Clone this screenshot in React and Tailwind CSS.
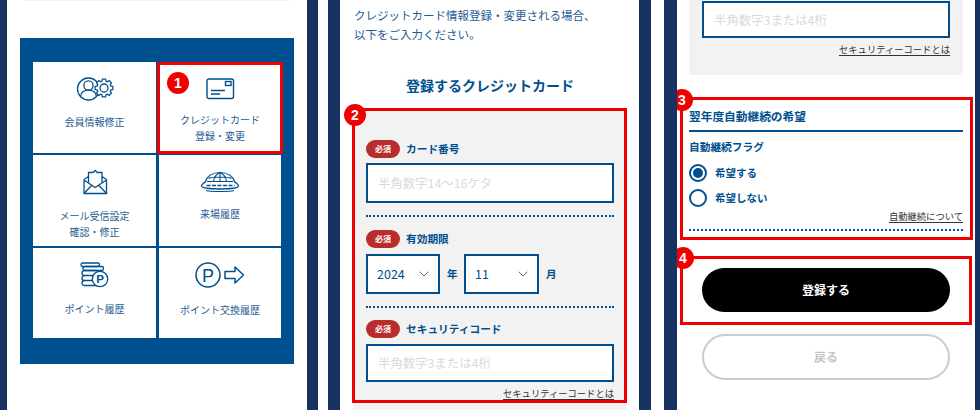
import React from 'react';
import { ChevronDown } from 'lucide-react';

const BLUE = '#00508f';

const gearPath = (cx, cy, ro, ri, teeth) => {
    const pts = [];
    const step = (Math.PI * 2) / teeth;
    for (let i = 0; i < teeth; i++) {
        const a = i * step;
        [[-0.32, ri], [-0.18, ro], [0.18, ro], [0.32, ri]].forEach(([f, r]) => {
            const t = a + f * step * 1.25;
            pts.push(`${(cx + Math.cos(t) * r).toFixed(2)} ${(cy + Math.sin(t) * r).toFixed(2)}`);
        });
    }
    return `M${pts.join('L')}Z`;
};

const MemberIcon = () => (
    <svg width="38" height="26" viewBox="0 0 38 26" fill="none" stroke={BLUE} strokeWidth="1.3">
        <circle cx="12.5" cy="13" r="11" />
        <circle cx="12.5" cy="9.5" r="4.6" />
        <path d="M4.5 20.5c.6-4.2 3.6-6.3 8-6.3s7.4 2.1 8 6.3" />
        <path d={gearPath(28, 12, 9, 7, 8)} fill="#fff" />
        <circle cx="28" cy="12" r="4" />
    </svg>
);

const CardIcon = () => (
    <svg width="29" height="22" viewBox="0 0 29 22" fill="none" stroke={BLUE} strokeWidth="1.4">
        <rect x="1" y="1" width="26.5" height="19.5" rx="2" />
        <rect x="19.5" y="3.5" width="5.5" height="4" />
        <path d="M5 12.5h14M5 16h9" strokeWidth="1.3" />
    </svg>
);

const MailIcon = () => (
    <svg width="26" height="26" viewBox="0 0 26 26" fill="none" stroke={BLUE} strokeWidth="1.3">
        <path d="M2 10.5v14h22.5v-14" />
        <path d="M2 10.5l4.5-3M24.5 10.5l-4.5-3" />
        <path d="M6.5 13.5V3.5H11l2.2-2 2.2 2H20v10" />
        <path d="M2 11l11.2 7.5L24.500 11M2 24.500l8-8.500M24.500 24.500l-8-8.500" />
    </svg>
);

const StadiumIcon = () => (
    <svg width="40" height="22" viewBox="0 0 40 22" fill="none" stroke={BLUE} strokeWidth="1.1">
        <path d="M5 11.5C7 5 13 1.5 20 1.5s13 3.5 15 10" />
        <path d="M13.5 10.500C14 6.500 16.500 3 20 1.500c3.500 1.500 6 5 6.500 9M20 1.500v9M8.500 7.500C13 5.500 27 5.500 31.500 7.500M7 10.500h26" />
        <path d="M5 11c-2 1.500-3.500 3-3.500 4 0 1.800 8 3 18.500 3s18.500-1.200 18.500-3c0-1-1.500-2.500-3.500-4" strokeWidth="1.3" />
        <path d="M6.500 14.500h28" strokeWidth="1.5" strokeDasharray="4 1.5" />
        <path d="M6 19.500c4 1.300 24 1.300 28 0" />
    </svg>
);

const CoinIcon = () => (
    <svg width="29" height="26" viewBox="0 0 29 26" fill="none" stroke={BLUE} strokeWidth="1.3">
        <rect x="1" y="1" width="18.5" height="3.5" rx="1.7" />
        <rect x="3" y="4.5" width="20.5" height="4" rx="1.7" />
        <path d="M17 8.500H4.500a1.500 1.500 0 0 0 0 5H13M13 13.500H4.500a1.500 1.500 0 0 0 0 5H13M13.500 18.500h-9a1.500 1.500 0 0 0 0 5h12" />
        <circle cx="20" cy="17" r="7.7" fill="#fff" />
        <text x="20" y="21.2" textAnchor="middle" fontSize="11.5" fontWeight="700" fill={BLUE} stroke="none" fontFamily="Liberation Sans, sans-serif">P</text>
    </svg>
);

const ExchangeIcon = () => (
    <svg width="50" height="26" viewBox="0 0 50 26" fill="none" stroke={BLUE} strokeWidth="1.5">
        <circle cx="13" cy="13" r="12" />
        <text x="13" y="19.5" textAnchor="middle" fontSize="18" fill={BLUE} stroke="none" fontFamily="Liberation Sans, sans-serif">P</text>
        <path d="M30 9.5h10V5l8.500 8-8.500 8v-4.500H30z" strokeLinejoin="round" />
    </svg>
);

const menuItems = [
    { icon: <MemberIcon />, lines: ['会員情報修正'], labelClass: 'mt-[12px]' },
    { icon: <CardIcon />, lines: ['クレジットカード', '登録・変更'], labelClass: 'mt-[10px]', marked: true },
    { icon: <MailIcon />, lines: ['メール受信設定', '確認・修正'], labelClass: 'mt-[13px]' },
    { icon: <StadiumIcon />, lines: ['来場履歴'], labelClass: 'mt-[11px]' },
    { icon: <CoinIcon />, lines: ['ポイント履歴'], labelClass: 'mt-[13px]' },
    { icon: <ExchangeIcon />, lines: ['ポイント交換履歴'], labelClass: 'mt-[14px]' },
];

const NumberBadge = ({ n, className }) => (
    <span className={`absolute z-10 flex h-[22px] w-[22px] items-center justify-center rounded-full bg-[#f00000] text-[14px] font-bold leading-none text-white [font-family:'Liberation_Sans',sans-serif] ${className}`}>
        {n}
    </span>
);

const Required = () => (
    <span className="flex h-[18px] w-[34px] items-center justify-center rounded-full bg-[#b92e2c] text-[8px] font-bold leading-none text-white">必須</span>
);

const FieldLabel = ({ children }) => (
    <div className="flex h-[18px] items-center gap-[6px]">
        <Required />
        <span className="text-[10.7px] font-bold leading-none text-[#00508f]">{children}</span>
    </div>
);

const TextInput = ({ placeholder, className }) => (
    <input
        type="text"
        placeholder={placeholder}
        readOnly
        className={`block w-full border-2 border-[#00508f] bg-white px-[10px] text-[12.4px] outline-none placeholder:text-[#dadada] ${className}`}
    />
);

const SelectBox = ({ value, className }) => (
    <div className={`flex h-[40px] items-center justify-between border-2 border-[#00508f] bg-white pl-[9px] pr-[6px] text-[12.5px] text-[#00508f] ${className}`}>
        {value}
        <ChevronDown className="h-[16px] w-[16px] text-[#555]" strokeWidth={1.3} />
    </div>
);

const HelpLink = ({ children, className }) => (
    <div className={`text-right text-[9.3px] text-[#333] ${className}`}>
        <a className="underline underline-offset-2">{children}</a>
    </div>
);

const Radio = ({ checked, label }) => (
    <div className="flex h-[18px] items-center gap-[8px]">
        <span className="flex h-[18px] w-[18px] items-center justify-center rounded-full border-2 border-[#00508f]">
            {checked && <span className="h-[10px] w-[10px] rounded-full bg-[#00508f]" />}
        </span>
        <span className="text-[10.5px] font-bold text-[#00508f]">{label}</span>
    </div>
);

export default function App() {
    return (
        <div className="flex h-[410px] w-[980px] overflow-hidden bg-white text-[#00508f] [font-family:'Noto_Sans_CJK_JP','Noto_Sans',sans-serif]">
            {/* menu */}
            <div className="h-[410px] w-[318px] shrink-0 overflow-hidden border-l-[7px] border-r-[11px] border-[#173364] bg-white">
                <div className="mx-[17px] h-px bg-[#eef4fa]" />
                <div className="ml-[13px] mr-[13px] mt-[37px] h-[326px] bg-[#00508f] pl-[13px] pt-[24px]">
                    <div className="grid grid-cols-[123px_122px] grid-rows-[91px_91px_90px] gap-x-[3px] gap-y-[2px]">
                        {menuItems.map((item) => (
                            <div key={item.lines[0]} className="relative flex flex-col items-center bg-white pt-[14px]">
                                {item.marked && (
                                    <>
                                        <div className="absolute -left-[2px] -right-[2px] top-0 bottom-[-1px] border-[3px] border-[#f00000]" />
                                        <NumberBadge n="1" className="left-[8px] top-[10px]" />
                                    </>
                                )}
                                <div className="flex h-[26px] items-center justify-center">{item.icon}</div>
                                <div className={`text-center text-[10px] leading-[16px] text-[#1f5c93] ${item.labelClass}`}>
                                    {item.lines.map((line) => <div key={line}>{line}</div>)}
                                </div>
                            </div>
                        ))}
                    </div>
                </div>
            </div>

            {/* card form */}
            <div className="ml-[10px] h-[410px] w-[323px] shrink-0 overflow-hidden border-x-[12px] border-[#173364] bg-white">
                <p className="ml-[14px] mt-[6px] text-[11.5px] leading-[18.5px] text-[#1f5c93]">
                    クレジットカード情報登録・変更される場合、<br />以下をご入力ください。
                </p>
                <h2 className="mt-[32px] h-[20px] pl-[1px] text-center text-[14px] font-bold leading-[20px] text-[#00508f]">登録するクレジットカード</h2>
                <div className="relative mx-[13px] mt-[14px] h-[320px] bg-[#f2f2f2] pl-[13px] pr-[12px] pt-[31px]">
                    <div className="absolute -left-[1px] -right-[1px] -top-[1px] h-[295px] border-[3px] border-[#f00000]" />
                    <NumberBadge n="2" className="-left-[9px] -top-[5px]" />
                    <FieldLabel>カード番号</FieldLabel>
                    <TextInput placeholder="半角数字14〜16ケタ" className="mt-[5px] h-[40px]" />
                    <div className="mt-[12px] border-t-2 border-dotted border-[#00508f]" />
                    <div className="mt-[13px]"><FieldLabel>有効期限</FieldLabel></div>
                    <div className="mt-[6px] flex items-center">
                        <SelectBox value="2024" className="w-[74px]" />
                        <span className="ml-[7px] w-[17px] text-[10.5px] font-bold">年</span>
                        <SelectBox value="11" className="w-[75px]" />
                        <span className="ml-[7px] text-[10.5px] font-bold">月</span>
                    </div>
                    <div className="mt-[12px] border-t-2 border-dotted border-[#00508f]" />
                    <div className="mt-[12px]"><FieldLabel>セキュリティコード</FieldLabel></div>
                    <TextInput placeholder="半角数字3または4桁" className="mt-[6px] h-[38px]" />
                    <HelpLink className="mt-[3px] leading-[16px]">セキュリティーコードとは</HelpLink>
                </div>
            </div>

            {/* continuation + buttons */}
            <div className="ml-[13px] h-[410px] w-[316px] shrink-0 overflow-hidden border-l-[13px] border-r-[5px] border-[#173364] bg-white">
                <div className="mx-[12px] h-[75px] bg-[#f2f2f2] px-[13px] pt-[1px]">
                    <TextInput placeholder="半角数字3または4桁" className="h-[37px]" />
                    <HelpLink className="mt-[3px] leading-[16px]">セキュリティーコードとは</HelpLink>
                </div>

                <div className="relative mx-[12px] mt-[31px]">
                    <div className="absolute -left-[9px] -right-[10px] -top-[9px] h-[143px] border-[3px] border-[#f00000]" />
                    <NumberBadge n="3" className="-left-[18px] -top-[17px]" />
                    <div className="border-b-2 border-[#00508f] pb-[4px] text-[11.7px] font-bold leading-[20px]">翌年度自動継続の希望</div>
                    <div className="mt-[7px] text-[10.7px] font-bold leading-[16px]">自動継続フラグ</div>
                    <div className="mt-[9px]"><Radio checked label="希望する" /></div>
                    <div className="mt-[7px]"><Radio label="希望しない" /></div>
                    <HelpLink className="mt-[2px] leading-[14px]">自動継続について</HelpLink>
                    <div className="mt-[6px] border-t-2 border-dotted border-[#00508f]" />
                </div>

                <div className="relative mx-[25px] mt-[37px]">
                    <div className="absolute -left-[22px] -right-[22px] -top-[12px] h-[69px] border-[3px] border-[#f00000]" />
                    <NumberBadge n="4" className="-left-[30px] -top-[21px]" />
                    <button className="block h-[44px] w-full rounded-full bg-black text-[12px] font-bold text-white">登録する</button>
                </div>
                <button className="mx-[25px] mt-[22px] block h-[46px] w-[248px] rounded-full border-2 border-[#cccccc] bg-white text-[12px] font-bold text-[#c4c4c4]">戻る</button>
            </div>
        </div>
    );
}
